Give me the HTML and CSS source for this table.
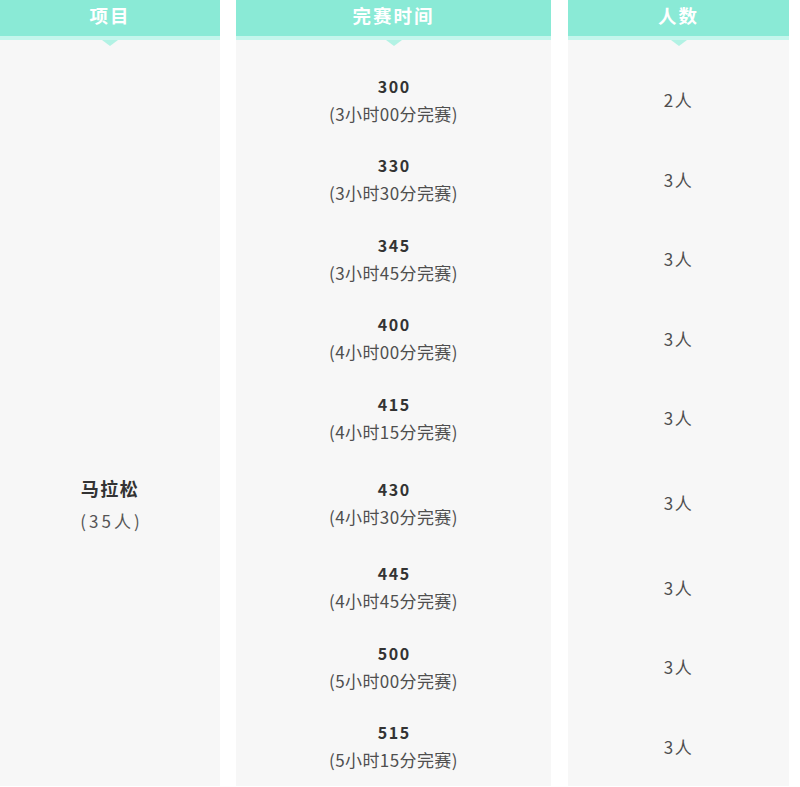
FILE: index.html
```html
<!DOCTYPE html>
<html lang="zh-CN">
<head>
<meta charset="utf-8">
<title>完赛时间</title>
<link rel="stylesheet" href="styles.css">
</head>
<body>
<div class="table">
  <div class="col col-item">
    <div class="head"><span class="head-text">项目</span></div>
    <div class="body body-item">
      <div class="item-name">马拉松</div>
      <div class="item-count">(35人)</div>
    </div>
  </div>
  <div class="col col-time">
    <div class="head"><span class="head-text">完赛时间</span></div>
    <div class="body">
      <div class="row"><div class="num">300</div><div class="sub">(3小时00分完赛)</div></div>
      <div class="row"><div class="num">330</div><div class="sub">(3小时30分完赛)</div></div>
      <div class="row"><div class="num">345</div><div class="sub">(3小时45分完赛)</div></div>
      <div class="row"><div class="num">400</div><div class="sub">(4小时00分完赛)</div></div>
      <div class="row"><div class="num">415</div><div class="sub">(4小时15分完赛)</div></div>
      <div class="row tall"><div class="num">430</div><div class="sub">(4小时30分完赛)</div></div>
      <div class="row"><div class="num">445</div><div class="sub">(4小时45分完赛)</div></div>
      <div class="row"><div class="num">500</div><div class="sub">(5小时00分完赛)</div></div>
      <div class="row"><div class="num">515</div><div class="sub">(5小时15分完赛)</div></div>
    </div>
  </div>
  <div class="col col-count">
    <div class="head"><span class="head-text">人数</span></div>
    <div class="body">
      <div class="row"><div class="cnt">2人</div></div>
      <div class="row"><div class="cnt">3人</div></div>
      <div class="row"><div class="cnt">3人</div></div>
      <div class="row"><div class="cnt">3人</div></div>
      <div class="row"><div class="cnt">3人</div></div>
      <div class="row tall"><div class="cnt">3人</div></div>
      <div class="row"><div class="cnt">3人</div></div>
      <div class="row"><div class="cnt">3人</div></div>
      <div class="row"><div class="cnt">3人</div></div>
    </div>
  </div>
</div>
</body>
</html>
```
FILE: styles.css
```css
html, body {
  margin: 0;
  padding: 0;
  background: #ffffff;
}
body {
  font-family: "Noto Sans CJK SC", "Noto Sans", sans-serif;
  color: #333;
  overflow: hidden;
  height: 787px;
}
.table {
  display: flex;
  align-items: stretch;
}
.col {
  display: flex;
  flex-direction: column;
}
.col-item { width: 220px; }
.col-time { width: 315px; margin-left: 16px; }
.col-count { width: 221px; margin-left: 17px; }

.head {
  position: relative;
  height: 36px;
  background: #8aead6;
  border-bottom: 4px solid #c4f6ec;
  display: flex;
  align-items: center;
  justify-content: center;
}
.head::after {
  content: "";
  position: absolute;
  left: 50%;
  bottom: -10px;
  margin-left: -8px;
  border-left: 8px solid transparent;
  border-right: 8px solid transparent;
  border-top: 6px solid #b2f2e4;
}
.head-text {
  color: #ffffff;
  font-weight: bold;
  font-size: 18.5px;
  letter-spacing: 2px;
  line-height: 1;
  margin-top: -5px;
}
.body {
  flex: 1;
  background: #f7f7f7;
  padding-top: 20px;
  display: flex;
  flex-direction: column;
}
.body-item {
  padding-top: 434px;
  align-items: center;
}
.item-name {
  font-size: 18px;
  font-weight: bold;
  letter-spacing: 1.5px;
  line-height: 28px;
  color: #333;
}
.item-count {
  margin-top: 5px;
  font-size: 17px;
  letter-spacing: 3px;
  margin-right: -3px;
  line-height: 28px;
  color: #555;
}
.row {
  height: 79.5px;
  display: flex;
  flex-direction: column;
  align-items: center;
  justify-content: center;
}
.row.tall { height: 90px; }
.num {
  font-size: 16px;
  font-weight: bold;
  letter-spacing: 1.5px;
  margin-right: -1.5px;
  line-height: 27px;
  color: #333;
}
.sub {
  font-size: 17px;
  letter-spacing: 0.4px;
  line-height: 27px;
  color: #4f4f4f;
}
.cnt {
  font-size: 17px;
  letter-spacing: 1.5px;
  line-height: 27px;
  color: #4f4f4f;
}
```
